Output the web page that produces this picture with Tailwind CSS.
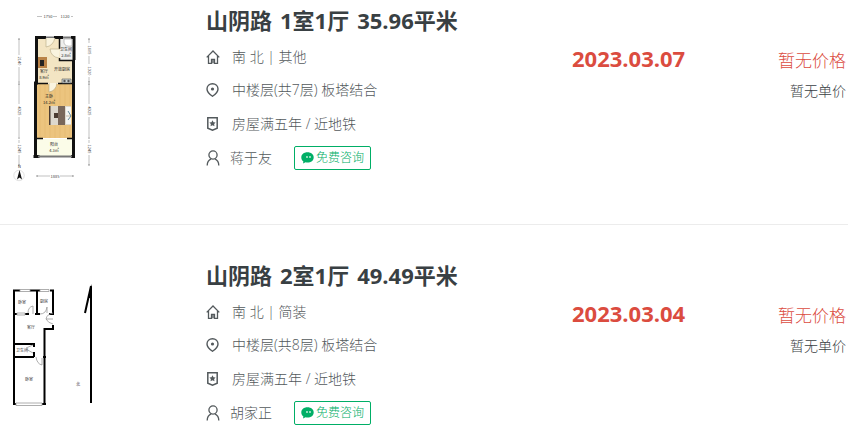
<!DOCTYPE html>
<html lang="zh-CN">
<head>
<meta charset="utf-8">
<meta name="viewport" content="width=device-width, initial-scale=1">
<title>成交记录</title>
<script src="https://cdn.jsdelivr.net/npm/@tailwindcss/browser@4"></script>
</head>
<body class="bg-white text-sm font-light text-[#53595c] font-['Open_Sans','Noto_Sans_CJK_SC',sans-serif]">
<svg class="hidden" aria-hidden="true">
  <symbol id="home" viewBox="0 0 14 14"><path d="M.7 7.400 7 1l6.300 6.400M2.500 6v7.300h3V9.300h3v4h3V6" fill="none" stroke="currentColor" stroke-width="1.300"/><path d="M6.300 9.500h1.400v3.800H6.300z" fill="currentColor"/></symbol>
  <symbol id="pin" viewBox="0 0 14 14"><path d="M6.500.7C3.300.7 1 3 1 5.900c0 2.900 2.700 5.400 5.500 7.400C9.300 11.300 12 8.800 12 5.900 12 3 9.700.7 6.500.7Z" fill="none" stroke="currentColor" stroke-width="1.400"/><circle cx="6.500" cy="6" r="1.600" fill="currentColor"/></symbol>
  <symbol id="badge" viewBox="0 0 14 14"><path d="M1.800.8h9.400v10.400L6.500 13.200l-4.700-2z" fill="none" stroke="currentColor" stroke-width="1.500"/><path d="m6.500 3.300 1 1.900 2.100.3-1.500 1.500.4 2.200-2-1-2 1 .4-2.200L3.400 5.500l2.100-.3z" fill="currentColor"/></symbol>
  <symbol id="user" viewBox="0 0 14 16"><circle cx="7" cy="5" r="4.100" fill="none" stroke="currentColor" stroke-width="1.300"/><path d="M1.200 15.500c0-3.500 2-5.700 4-6.600M12.800 15.500c0-3.500-2-5.700-4-6.600" fill="none" stroke="currentColor" stroke-width="1.300"/></symbol>
  <symbol id="chat" viewBox="0 0 13 12"><path d="M6.500.3C2.800.3.300 2.500.300 5.400c0 1.700.8 3 2.100 4L2 11.500l2.600-1.200c.6.200 1.200.2 1.900.2 3.600 0 6.200-2.200 6.200-5.100S10.100.3 6.500.3Z" fill="currentColor"/><path d="M6 4v2M9 4v2" stroke="white" stroke-width="1.100"/></symbol>
</svg>
<main class="mr-1.5">
  <article class="flex h-[225px] items-start border-b border-[#ececec]">
    <a href="#" class="w-[206px] shrink-0" aria-label="山阴路 1室1厅 户型图">
      <svg width="100" height="190" viewBox="0 0 100 190" font-family="'Noto Sans CJK SC',sans-serif" font-weight="400">
        <g stroke="#999" stroke-width=".6" fill="none">
          <path d="M37 16.500h5M53 16.500h4M71 16.500h2M19 39v16M19 67v14M19 84v20M19 117v20M19 140v3M19 155v10M89 39v4M89 56v8M89 77v5M89 84v20M89 117v20M89 140v3M89 155v10M37 176h13M60 176h13"/>
          <path stroke="#555" d="M18 39h2M18 82h2M18 84h2M18 138h2M18 165h2M88 39h2M88 82h2M88 84h2M88 138h2M88 165h2M37 175v2M73 175v2"/>
        </g>
        <g fill="#444" font-size="4" text-anchor="middle">
          <text x="48" y="18">1750</text><text x="65" y="18">1120</text><text x="55" y="178">1885</text>
          <text transform="translate(18 61) rotate(90)">2140</text><text transform="translate(18 111) rotate(90)">4325</text><text transform="translate(18 149) rotate(90)">1245</text>
          <text transform="translate(88 50) rotate(90)">1605</text><text transform="translate(88 71) rotate(90)">1320</text><text transform="translate(88 111) rotate(90)">4325</text><text transform="translate(88 149) rotate(90)">1245</text>
        </g>
        <path fill="#f3e5c3" d="M38 38h22v22h13v23H38z"/><path fill="#efefed" d="M60 38h13v22H60z"/><path fill="#ecc47e" d="M36 84h37v54H36z"/><path fill="#fbfce8" d="M36 139h37v17H36z"/>
        <path stroke="#e2b76d" stroke-width=".5" d="M40 84v54M45 84v54M50 84v54M55 84v54M60 84v54M65 84v54M70 84v54"/>
        <g fill="none" stroke="#111"><path stroke-width="3" d="M46 37.500H36.500V83H35.500V156M54 37.500h9M71 37.500h3V60M73.500 60V156M33.500 156.500h6M71 156.500h4"/><path stroke-width="1.500" d="M59.500 38v11M59.500 58v2.500H74M36 83.500h12M58 83.500h16M36 138.500h7M67 138.500h7"/></g>
        <path stroke="#777" stroke-width="2" d="M38 156.500h34M46 37.500h8M63 37.500h8"/>
        <path fill="#faf4df" stroke="#b5a883" stroke-width=".6" d="M46 38v9q7-1 9-9M60 49H50q1 8 9 9M49 83v9q7-1 8-9"/>
        <path fill="#b98247" d="M38 57h9v11h-9z"/><path fill="#222" d="M40 60h4v6h-4z"/>
        <path fill="#fff" stroke="#aaa" stroke-width=".7" d="M64 39h8v7q-7 1-8-3z"/>
        <path fill="#cbd3d3" stroke="#555" stroke-width=".6" d="M62 79h9v4h-9z"/><circle cx="64.500" cy="81" r="1.200" fill="#555"/><circle cx="68.500" cy="81" r="1.200" fill="#555"/>
        <path fill="#ddd8cd" d="M50 106h21v19H50z"/><path fill="#79675a" d="M58 106h7v19h-7z"/><path fill="#4b3c32" d="M49 106h1.500v19H49zM54 113h4v5h-4z"/><path fill="#f5f5f2" d="M66 107h5v8h-5zM66 117h5v7h-5z"/><path d="m68 111 3 5-3 4" stroke="#668b99" fill="none"/>
        <g fill="#222" font-size="4" text-anchor="middle"><text x="66" y="51">卫生间</text><text x="66" y="57">2.8㎡</text><text x="62" y="71">开放厨房</text><text x="44" y="73">客厅</text><text x="44" y="79">8.9㎡</text><text x="49" y="98">主卧</text><text x="49" y="104">14.2㎡</text><text x="54" y="146">阳台</text><text x="54" y="152">4.3㎡</text></g>
        <circle cx="19" cy="175.500" r="5.200" fill="none" stroke="#ccc" stroke-width=".6"/><path d="m19.500 170 2.500 9.500-2.500-2-2.500 2z" fill="#111"/><text x="18" y="168" font-size="4" fill="#111">N</text>
      </svg>
    </a>
    <section class="w-[366px] shrink-0 pt-px">
      <h2 class="flex h-10 items-center gap-2 text-[22px] font-bold whitespace-nowrap text-[#394043]"><span>山阴路</span><span>1室1厅</span><span>35.96平米</span></h2>
      <p class="flex h-8 items-center gap-3"><svg class="size-3.5"><use href="#home"/></svg>南 北 | 其他</p>
      <p class="flex h-[34px] items-center gap-3"><svg class="size-3.5"><use href="#pin"/></svg>中楼层(共7层) 板塔结合</p>
      <p class="flex h-[34px] items-center gap-3"><svg class="size-3.5"><use href="#badge"/></svg>房屋满五年 / 近地铁</p>
      <div class="flex h-[34px] items-center gap-2.5"><svg class="h-4 w-3.5"><use href="#user"/></svg><span>蒋于友</span><button type="button" class="ml-3 flex h-6 items-center gap-0.5 rounded-xs border border-[#00ae66] px-1.5 text-xs text-[#00ae66]"><svg class="h-3 w-[13px]"><use href="#chat"/></svg>免费咨询</button></div>
    </section>
    <time datetime="2023-03-07" class="pt-11 text-[22px] leading-7 font-bold text-[#db4c3f]">2023.03.07</time>
    <section class="ml-auto pt-[45px] pr-0.5 text-right">
      <p class="text-[17px] leading-8 text-[#db4c3f]">暂无价格</p>
      <p class="leading-7 text-[#394043]">暂无单价</p>
    </section>
  </article>

  <article class="flex items-start pt-[30px]">
    <a href="#" class="w-[206px] shrink-0" aria-label="山阴路 2室1厅 户型图">
      <svg width="100" height="160" viewBox="0 0 100 160" font-family="'Noto Sans CJK SC',sans-serif" font-weight="400">
        <g fill="none" stroke="#000" stroke-width="2">
          <path d="M20 35.500h-6V149M30 35.500h10M50 35.500h3V59h-4M37 35v23M14 59h3M25 59h4M35 59h5M53 70v4h-8.500v75M14 89h20v3M34 97v5M14 102h20M43 102h3M13 149h3M42 149h4"/>
          <path d="M91 40v108"/><path d="M91 31 85 58"/>
        </g>
        <path d="M92 29v14h-4z"/>
        <g fill="none" stroke="#999" stroke-width=".8"><path d="M20 34.500h10v2H20zM40 34.500h9v2h-9zM16 148h26v2.500H16zM17 58h8v2h-8zM33 59v-8q-5 1-5 7M40 59q6 0 7-7v6M53 64h-7q1-5 7-6M46 64q2 4 7 5M26 93l7-3M26 94l7 4M36 102q1 7 6 8v-7"/></g>
        <g fill="#333" font-size="4" text-anchor="middle"><text x="22" y="49">卧室</text><text x="44" y="48">厨房</text><text x="31" y="74">客厅</text><text x="22" y="97">卫生间</text><text x="29" y="126">卧室</text><text x="78" y="131">北</text></g>
      </svg>
    </a>
    <section class="w-[366px] shrink-0 pt-px">
      <h2 class="flex h-10 items-center gap-2 text-[22px] font-bold whitespace-nowrap text-[#394043]"><span>山阴路</span><span>2室1厅</span><span>49.49平米</span></h2>
      <p class="flex h-8 items-center gap-3"><svg class="size-3.5"><use href="#home"/></svg>南 北 | 简装</p>
      <p class="flex h-[34px] items-center gap-3"><svg class="size-3.5"><use href="#pin"/></svg>中楼层(共8层) 板塔结合</p>
      <p class="flex h-[34px] items-center gap-3"><svg class="size-3.5"><use href="#badge"/></svg>房屋满五年 / 近地铁</p>
      <div class="flex h-[34px] items-center gap-2.5"><svg class="h-4 w-3.5"><use href="#user"/></svg><span>胡家正</span><button type="button" class="ml-3 flex h-6 items-center gap-0.5 rounded-xs border border-[#00ae66] px-1.5 text-xs text-[#00ae66]"><svg class="h-3 w-[13px]"><use href="#chat"/></svg>免费咨询</button></div>
    </section>
    <time datetime="2023-03-04" class="pt-11 text-[22px] leading-7 font-bold text-[#db4c3f]">2023.03.04</time>
    <section class="ml-auto pt-[45px] pr-0.5 text-right">
      <p class="text-[17px] leading-8 text-[#db4c3f]">暂无价格</p>
      <p class="leading-7 text-[#394043]">暂无单价</p>
    </section>
  </article>
</main>
</body>
</html>
